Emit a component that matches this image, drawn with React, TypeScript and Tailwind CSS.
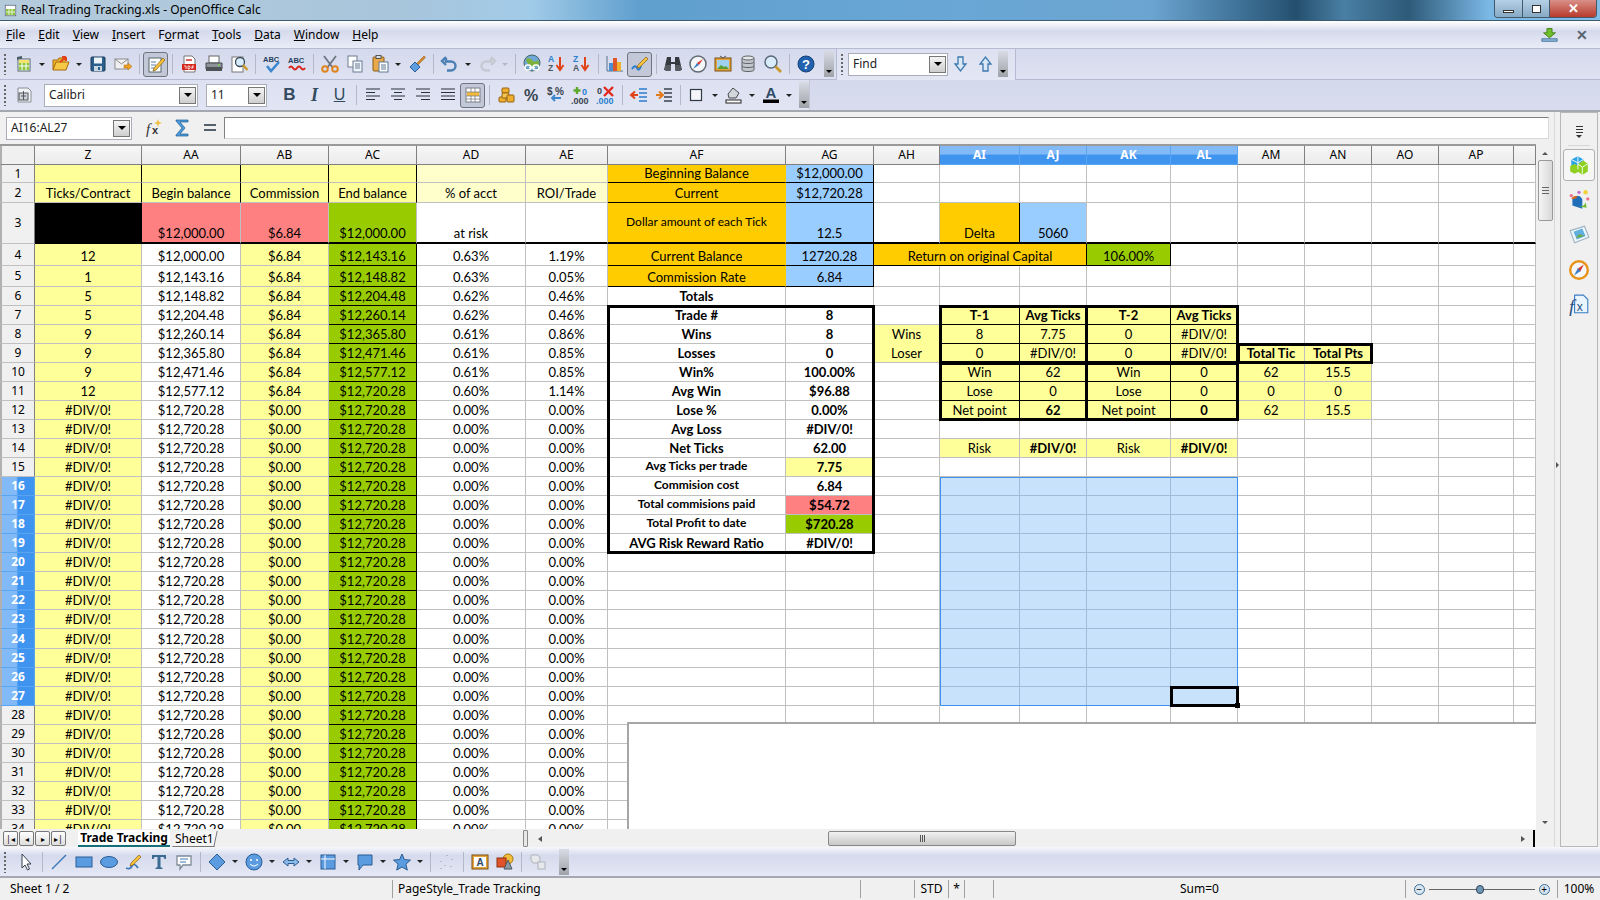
import React from "react";
import { twMerge } from "tailwind-merge";

const ui = "font-['Noto_Sans',sans-serif]";
const COLS = ["Z", "AA", "AB", "AC", "AD", "AE", "AF", "AG", "AH", "AI", "AJ", "AK", "AL", "AM", "AN", "AO", "AP", ""];
const GRID =
  "grid grid-cols-[35px_107px_99px_88px_88px_109px_82px_178px_88px_66px_80px_67px_84px_67px_67px_67px_67px_75px_22px] grid-rows-[19px_18px_20px_41px_22px_21px_repeat(18,19px)_20px_repeat(10,19px)]";

const YELLOW = "bg-[#ffff99]";
const ORANGE = "bg-[#ffcc00]";
const BLUE = "bg-[#99ccff]";
const GREEN = "bg-[#99cc00]";
const PINK = "bg-[#ff8080]";
const BK = "border-r-black border-b-black";

type Cell = { t?: string; c?: string; span?: boolean };

// trading rows 4-11, everything below that is the same #DIV/0! line
const trades: string[][] = [
  ["12", "$12,000.00", "$6.84", "$12,143.16", "0.63%", "1.19%"],
  ["1", "$12,143.16", "$6.84", "$12,148.82", "0.63%", "0.05%"],
  ["5", "$12,148.82", "$6.84", "$12,204.48", "0.62%", "0.46%"],
  ["5", "$12,204.48", "$6.84", "$12,260.14", "0.62%", "0.46%"],
  ["9", "$12,260.14", "$6.84", "$12,365.80", "0.61%", "0.86%"],
  ["9", "$12,365.80", "$6.84", "$12,471.46", "0.61%", "0.85%"],
  ["9", "$12,471.46", "$6.84", "$12,577.12", "0.61%", "0.85%"],
  ["12", "$12,577.12", "$6.84", "$12,720.28", "0.60%", "1.14%"],
];
const emptyTrade = ["#DIV/0!", "$12,720.28", "$0.00", "$12,720.28", "0.00%", "0.00%"];

const B = "font-bold";
const S = "font-bold text-[12px]";
const cells: Record<string, Cell> = {
  Z1: { c: YELLOW + " border-r-black" },
  AA1: { c: YELLOW + " border-r-black" },
  AB1: { c: YELLOW + " border-r-black" },
  AC1: { c: YELLOW + " border-r-black" },
  AD1: { c: "bg-[#ffffcc]" },
  AE1: { c: "bg-[#ffffcc]" },
  Z2: { t: "Ticks/Contract", c: YELLOW + " border-r-black" },
  AA2: { t: "Begin balance", c: YELLOW + " border-r-black" },
  AB2: { t: "Commission", c: YELLOW + " border-r-black" },
  AC2: { t: "End balance", c: YELLOW + " border-r-black" },
  AD2: { t: "% of acct", c: "bg-[#ffffcc]" },
  AE2: { t: "ROI/Trade", c: "bg-[#ffffcc]" },
  Z3: { c: "bg-black border-black" },
  AA3: { t: "$12,000.00", c: PINK },
  AB3: { t: "$6.84", c: PINK },
  AC3: { t: "$12,000.00", c: GREEN },
  AD3: { t: "at risk" },
  AF1: { t: "Beginning Balance", c: ORANGE + " border-b-black border-r-[#ffcc00]" },
  AG1: { t: "$12,000.00", c: BLUE + " " + BK },
  AF2: { t: "Current", c: ORANGE + " border-b-black border-r-[#ffcc00]" },
  AG2: { t: "$12,720.28", c: BLUE + " " + BK },
  AF3: { t: "Dollar amount of each Tick", c: ORANGE + " items-center text-[12px] border-r-[#ffcc00]" },
  AG3: { t: "12.5", c: BLUE + " border-r-black" },
  AI3: { t: "Delta", c: ORANGE + " border-r-black" },
  AJ3: { t: "5060", c: BLUE },
  AF4: { t: "Current Balance", c: ORANGE + " border-b-black border-r-[#ffcc00]" },
  AG4: { t: "12720.28", c: BLUE + " " + BK },
  AH4: { t: "Return on original Capital", c: ORANGE + " border-b-black border-r-black", span: true },
  AK4: { t: "106.00%", c: GREEN + " " + BK },
  AF5: { t: "Commission Rate", c: ORANGE + " border-b-black border-r-[#ffcc00]" },
  AG5: { t: "6.84", c: BLUE + " " + BK },
  AF6: { t: "Totals", c: B },
  AF7: { t: "Trade #", c: B },
  AG7: { t: "8", c: B },
  AF8: { t: "Wins", c: B },
  AG8: { t: "8", c: B },
  AF9: { t: "Losses", c: B },
  AG9: { t: "0", c: B },
  AF10: { t: "Win%", c: B },
  AG10: { t: "100.00%", c: B },
  AF11: { t: "Avg Win", c: B },
  AG11: { t: "$96.88", c: B },
  AF12: { t: "Lose %", c: B },
  AG12: { t: "0.00%", c: B },
  AF13: { t: "Avg Loss", c: B },
  AG13: { t: "#DIV/0!", c: B },
  AF14: { t: "Net Ticks", c: B },
  AG14: { t: "62.00", c: B },
  AF15: { t: "Avg Ticks per trade", c: S },
  AG15: { t: "7.75", c: B + " " + YELLOW },
  AF16: { t: "Commision cost", c: S },
  AG16: { t: "6.84", c: B },
  AF17: { t: "Total commisions paid", c: S },
  AG17: { t: "$54.72", c: B + " " + PINK },
  AF18: { t: "Total Profit to date", c: S },
  AG18: { t: "$720.28", c: B + " " + GREEN },
  AF19: { t: "AVG Risk Reward Ratio", c: B },
  AG19: { t: "#DIV/0!", c: B },
  AH8: { t: "Wins", c: YELLOW + " border-b-[#ffff99]" },
  AH9: { t: "Loser", c: YELLOW },
  AI7: { t: "T-1", c: B + " " + YELLOW + " " + BK },
  AJ7: { t: "Avg Ticks", c: B + " " + YELLOW + " " + BK },
  AK7: { t: "T-2", c: B + " " + YELLOW + " " + BK },
  AL7: { t: "Avg Ticks", c: B + " " + YELLOW + " " + BK },
  AI8: { t: "8", c: YELLOW + " " + BK },
  AJ8: { t: "7.75", c: YELLOW + " " + BK },
  AK8: { t: "0", c: YELLOW + " " + BK },
  AL8: { t: "#DIV/0!", c: YELLOW + " " + BK },
  AI9: { t: "0", c: YELLOW + " " + BK },
  AJ9: { t: "#DIV/0!", c: YELLOW + " " + BK },
  AK9: { t: "0", c: YELLOW + " " + BK },
  AL9: { t: "#DIV/0!", c: YELLOW + " " + BK },
  AI10: { t: "Win", c: YELLOW + " " + BK },
  AJ10: { t: "62", c: YELLOW + " " + BK },
  AK10: { t: "Win", c: YELLOW + " " + BK },
  AL10: { t: "0", c: YELLOW + " " + BK },
  AI11: { t: "Lose", c: YELLOW + " " + BK },
  AJ11: { t: "0", c: YELLOW + " " + BK },
  AK11: { t: "Lose", c: YELLOW + " " + BK },
  AL11: { t: "0", c: YELLOW + " " + BK },
  AI12: { t: "Net point", c: YELLOW + " " + BK },
  AJ12: { t: "62", c: B + " " + YELLOW + " " + BK },
  AK12: { t: "Net point", c: YELLOW + " " + BK },
  AL12: { t: "0", c: B + " " + YELLOW + " " + BK },
  AM9: { t: "Total Tic", c: B + " " + YELLOW },
  AN9: { t: "Total Pts", c: B + " " + YELLOW },
  AM10: { t: "62", c: YELLOW },
  AN10: { t: "15.5", c: YELLOW },
  AM11: { t: "0", c: YELLOW },
  AN11: { t: "0", c: YELLOW },
  AM12: { t: "62", c: YELLOW },
  AN12: { t: "15.5", c: YELLOW },
  AI14: { t: "Risk", c: YELLOW },
  AJ14: { t: "#DIV/0!", c: B + " " + YELLOW },
  AK14: { t: "Risk", c: YELLOW },
  AL14: { t: "#DIV/0!", c: B + " " + YELLOW },
};

function getCell(col: string, n: number): Cell {
  const key = col + n;
  const found = cells[key];
  if (found) return found;
  const idx = ["Z", "AA", "AB", "AC", "AD", "AE"].indexOf(col);
  if (n >= 4 && idx >= 0) {
    const t = (trades[n - 4] || emptyTrade)[idx];
    if (col === "Z" || col === "AB") return { t, c: YELLOW };
    if (col === "AC") return { t, c: GREEN + " " + BK };
    return { t };
  }
  if (n >= 16 && n <= 27 && ["AI", "AJ", "AK", "AL"].includes(col)) {
    return { c: "bg-[#c9e2fc] border-[#9fbbd8]" };
  }
  return {};
}

const selectedCols = ["AI", "AJ", "AK", "AL"];

function Sheet() {
  const rows: number[] = [];
  for (let i = 1; i <= 34; i++) rows.push(i);
  return (
    <div className="relative h-[685px] w-[1536px] overflow-hidden border-t-2 border-[#9a9a9a] bg-white font-['Lato',sans-serif] text-black">
      <div className={GRID}>
        <div className="border-r border-b border-l-2 border-r-[#808080] border-b-[#808080] border-l-[#b0b0b0] bg-[#f0f0f0]" />
        {COLS.map((c, i) =>
          selectedCols.includes(c) ? (
            <div
              key={i}
              className={`flex items-center justify-center border-b border-r border-[#5aa5f0] bg-[linear-gradient(#82baf8_0%,#82baf8_45%,#3f94f0_50%,#3f94f0_100%)] text-[12px] font-bold text-white ${ui}`}
            >
              {c}
            </div>
          ) : (
            <div
              key={i}
              className={`flex items-center justify-center border-b border-r border-[#808080] bg-[linear-gradient(#f7f7f7,#ebebeb)] text-[12px] ${ui}`}
            >
              {c}
            </div>
          ),
        )}
        {rows.map((n) => (
          <React.Fragment key={n}>
            {n >= 16 && n <= 27 ? (
              <div
                className={`flex items-center justify-center border-l-2 border-r border-b border-l-[#b0b0b0] border-r-[#5aa5f0] border-b-[#5aa5f0] bg-[linear-gradient(90deg,#82baf8_0%,#82baf8_45%,#3f94f0_50%,#3f94f0_100%)] text-[12px] font-bold text-white ${ui}`}
              >
                {n}
              </div>
            ) : (
              <div
                className={`flex items-center justify-center border-l-2 border-r border-b border-l-[#b0b0b0] border-r-[#808080] border-b-[#c0c0c0] bg-[#f0f0f0] text-[12px] ${ui}`}
              >
                {n}
              </div>
            )}
            {COLS.map((col) => {
              if (n === 4 && (col === "AI" || col === "AJ")) return null;
              const cell = col ? getCell(col, n) : {};
              return (
                <div
                  key={col || "end"}
                  className={twMerge(
                    "flex items-end justify-center overflow-hidden whitespace-nowrap border-r border-b border-[#c0c0c0] pb-px text-[13px] leading-[16px]",
                    n === 3 ? "border-b-2 border-b-black" : "",
                    cell.span ? "col-span-3" : "",
                    cell.c,
                  )}
                >
                  {cell.t}
                </div>
              );
            })}
          </React.Fragment>
        ))}
      </div>
      {/* thick cell borders and the selection sit over the cells, same tracks */}
      <div className={`pointer-events-none absolute inset-0 ${GRID}`}>
        <div className="col-start-8 col-end-10 row-start-8 row-end-21 -m-px border-[3px] border-black" />
        <div className="col-start-11 col-end-15 row-start-8 row-end-14 -m-px border-[3px] border-black" />
        <div className="col-start-13 col-end-14 row-start-8 row-end-14 -ml-0.5 border-l-[3px] border-black" />
        <div className="col-start-11 col-end-15 row-start-11 row-end-12 -mt-0.5 border-t-4 border-black" />
        <div className="col-start-15 col-end-17 row-start-10 row-end-11 -m-px border-[3px] border-black" />
        <div className="col-start-11 col-end-15 row-start-17 row-end-29 border border-[#3d92f0]" />
        <div className="relative col-start-14 col-end-15 row-start-28 row-end-29 -m-px border-[3px] border-black">
          <div className="absolute -right-[4px] -bottom-[4px] h-[5px] w-[5px] bg-black" />
        </div>
      </div>
      <div className="absolute top-[576px] bottom-0 left-[627px] right-0 border-t-2 border-l-2 border-[#a6a6a6] bg-white" />
    </div>
  );
}

const icons: Record<string, React.ReactNode> = {
  doc: (
    <>
      <path d="M3 3l5-1v4H3z" fill="#4a5a6a" />
      <rect x="4" y="5" width="12" height="12" fill="#fff" stroke="#566" />
      <rect x="5" y="9" width="10" height="7" fill="#8cc63f" />
      <path d="M5 12h10M8 9v7M12 9v7" stroke="#fff" />
      <rect x="5" y="6" width="10" height="3" fill="#f7e36b" />
    </>
  ),
  open: (
    <>
      <path d="M2 16V6h5l1-2h7v3" fill="#f0b92c" stroke="#a8690c" />
      <path d="M2 16l3-8h13l-3 8z" fill="#f6c944" stroke="#a8690c" />
      <path d="M9 8l6-5M15 3h-4M15 3v4" stroke="#e0431a" strokeWidth="2" fill="none" />
    </>
  ),
  save: (
    <>
      <rect x="3" y="3" width="14" height="14" rx="1" fill="#2b5f8e" stroke="#183a58" />
      <rect x="6" y="3.5" width="8" height="6" fill="#eef3f8" />
      <rect x="6" y="12" width="8" height="5" fill="#cbd6e0" />
      <rect x="10" y="13" width="2" height="3" fill="#2b5f8e" />
    </>
  ),
  mail: (
    <>
      <rect x="2" y="5" width="13" height="10" fill="#f1f1f1" stroke="#8b8b8b" />
      <path d="M2 5l6.5 5L15 5" fill="none" stroke="#8b8b8b" />
      <path d="M11 11h4V9l4 3.5-4 3.500V14h-4z" fill="#f0a020" stroke="#a86a10" strokeWidth=".5" />
    </>
  ),
  edit: (
    <>
      <rect x="3" y="4" width="12" height="14" fill="#fff" stroke="#566" />
      <path d="M5 8h5M5 11h5M5 14h4" stroke="#5b7fa6" />
      <path d="M8 14l9-10 2 2-9 10-3 1z" fill="#f4c23b" stroke="#8a5a12" strokeWidth=".7" />
    </>
  ),
  pdf: (
    <>
      <path d="M5 2h8l3 3v13H5z" fill="#fff" stroke="#777" />
      <rect x="3" y="10" width="14" height="6" fill="#d5281e" />
      <path d="M7 6h6" stroke="#c33" strokeWidth="1.500" />
      <path d="M5 12h2v3M9 12v3h1.500l.5-1.500-.5-1.500zM13 15v-3h2M13 13.500h1.500" stroke="#fff" strokeWidth=".8" fill="none" />
    </>
  ),
  print: (
    <>
      <rect x="5" y="2" width="10" height="7" fill="#fff" stroke="#666" />
      <path d="M2 9h16v6H2z" fill="#8d9499" stroke="#44494d" />
      <rect x="2" y="13" width="16" height="4" fill="#4c5257" />
      <circle cx="15" cy="11" r="1" fill="#7ed04b" />
    </>
  ),
  preview: (
    <>
      <rect x="3" y="3" width="11" height="15" fill="#fff" stroke="#777" />
      <circle cx="11" cy="8" r="4.500" fill="#d8ecfb" stroke="#3a4a58" strokeWidth="1.300" />
      <path d="M14 11l4.500 5" stroke="#c99a2c" strokeWidth="2.500" />
    </>
  ),
  spell: (
    <>
      <text x="1" y="8" fontSize="7.500" fontWeight="700" fill="#26425e" fontFamily="Liberation Sans">ABC</text>
      <path d="M5 12l4 5 8-9" fill="none" stroke="#3a87cf" strokeWidth="2.500" />
    </>
  ),
  autospell: (
    <>
      <text x="1" y="9" fontSize="7.500" fontWeight="700" fill="#26425e" fontFamily="Liberation Sans">ABC</text>
      <path d="M2 14q2-3 4 0t4 0 4 0 4 0" fill="none" stroke="#d8261c" strokeWidth="2" />
    </>
  ),
  cut: (
    <>
      <path d="M4 2l9 12M16 2L7 14" stroke="#6c7680" strokeWidth="1.800" />
      <circle cx="5" cy="15" r="2.800" fill="none" stroke="#e08420" strokeWidth="2" />
      <circle cx="15" cy="15" r="2.800" fill="none" stroke="#e08420" strokeWidth="2" />
    </>
  ),
  copy: (
    <>
      <rect x="3" y="2" width="9" height="11" fill="#fff" stroke="#6a7d90" />
      <rect x="8" y="7" width="9" height="11" fill="#eef4fb" stroke="#6a7d90" />
      <path d="M10 10h5M10 12h5M10 14h5" stroke="#6a7d90" />
    </>
  ),
  paste: (
    <>
      <rect x="3" y="3" width="11" height="14" rx="1" fill="#e9a84a" stroke="#8a5a12" />
      <rect x="6" y="1.500" width="5" height="3" fill="#d9dde2" stroke="#555" />
      <rect x="9" y="8" width="9" height="10" fill="#fff" stroke="#5e7a96" />
      <path d="M11 11h5M11 13h5M11 15h5" stroke="#5e7a96" />
    </>
  ),
  brush: (
    <>
      <path d="M9 10l8-8 1.500 1.500-8 8z" fill="#d4892c" stroke="#8a5a12" strokeWidth=".5" />
      <path d="M3 13l5-5 5 5-5 5z" fill="#5d9ee0" stroke="#2a5d94" />
    </>
  ),
  undo: (
    <path
      d="M6 4v3.500h5a4 4 0 0 1 0 9H7M6 3L2 7l4 4"
      fill="none"
      stroke="#4b7fb3"
      strokeWidth="2.400"
    />
  ),
  redo: (
    <path d="M14 4v3.500H9a4 4 0 0 0 0 9h4M14 3l4 4-4 4" fill="none" stroke="#c5c9d2" strokeWidth="2.400" />
  ),
  globe: (
    <>
      <circle cx="10" cy="9" r="8" fill="#6fa8d8" stroke="#466" />
      <path d="M4 5q4-2 6 1t6 0q2 4 0 6-6 2-9-1T4 5z" fill="#7fb03c" />
      <rect x="3" y="11" width="6" height="5" rx="2.500" fill="none" stroke="#fff" strokeWidth="1.500" />
      <rect x="11" y="11" width="6" height="5" rx="2.500" fill="none" stroke="#fff" strokeWidth="1.500" />
      <path d="M7 13.500h6" stroke="#fff" strokeWidth="1.500" />
    </>
  ),
  asc: (
    <>
      <text x="1" y="8" fontSize="8.500" fontWeight="700" fill="#2d7fce" fontFamily="Liberation Sans">A</text>
      <text x="1" y="17" fontSize="8.500" fontWeight="700" fill="#4d5660" fontFamily="Liberation Sans">Z</text>
      <path d="M13 3v12M9.500 11l3.500 5 3.500-5" fill="none" stroke="#e0431a" strokeWidth="2" />
    </>
  ),
  desc: (
    <>
      <text x="1" y="8" fontSize="8.500" fontWeight="700" fill="#2d7fce" fontFamily="Liberation Sans">Z</text>
      <text x="1" y="17" fontSize="8.500" fontWeight="700" fill="#4d5660" fontFamily="Liberation Sans">A</text>
      <path d="M13 3v12M9.500 11l3.500 5 3.500-5" fill="none" stroke="#e0431a" strokeWidth="2" />
    </>
  ),
  chart: (
    <>
      <path d="M2 2v15h16" fill="none" stroke="#55708c" />
      <rect x="4" y="9" width="4" height="8" fill="#4d8ed0" />
      <rect x="8" y="4" width="4" height="13" fill="#e0572a" />
      <rect x="12" y="8" width="4" height="9" fill="#f0b030" />
    </>
  ),
  draw: (
    <>
      <path d="M2 15q3-5 5-1t4-2" fill="none" stroke="#2d7fce" strokeWidth="2" />
      <path d="M8 11l8-8 2 2-8 8-3 1z" fill="#f4c23b" stroke="#8a5a12" strokeWidth=".7" />
    </>
  ),
  binoculars: (
    <>
      <path d="M4 3h4v5h4V3h4l3 13H12V10H8v6H1z" fill="#363a3e" />
      <rect x="2" y="11" width="6" height="6" rx="1" fill="#565b60" />
      <rect x="12" y="11" width="6" height="6" rx="1" fill="#565b60" />
    </>
  ),
  compass: (
    <>
      <circle cx="10" cy="10" r="8" fill="#f4f6f8" stroke="#606a74" strokeWidth="1.500" />
      <path d="M15 5l-4 6-2-2z" fill="#d8362a" />
      <path d="M5 15l4-6 2 2z" fill="#3a7ec4" />
    </>
  ),
  gallery: (
    <>
      <rect x="2" y="4" width="16" height="13" fill="#e3a53c" stroke="#7e4e10" />
      <rect x="4" y="6" width="12" height="9" fill="#9fd0f0" />
      <path d="M4 15l4-4 3 2 2-1 3 3z" fill="#5d9e32" />
      <path d="M7 2l3 2 3-2" fill="none" stroke="#555" />
    </>
  ),
  db: (
    <>
      <path d="M4 4v12c0 2 12 2 12 0V4" fill="#c3c7cb" stroke="#5d6368" />
      <ellipse cx="10" cy="4" rx="6" ry="2" fill="#e5e7e9" stroke="#5d6368" />
      <path d="M4 8c0 2 12 2 12 0M4 12c0 2 12 2 12 0" fill="none" stroke="#5d6368" />
    </>
  ),
  zoom: (
    <>
      <circle cx="8" cy="8" r="6" fill="#d8ecfb" stroke="#5a6a78" strokeWidth="1.500" />
      <path d="M12.500 12.500l5.500 5.500" stroke="#c99a2c" strokeWidth="2.800" />
    </>
  ),
  help: (
    <>
      <circle cx="10" cy="10" r="8" fill="#2162ae" stroke="#163f74" />
      <text x="10" y="15" textAnchor="middle" fontSize="13" fontWeight="700" fill="#fff" fontFamily="Liberation Sans">?</text>
    </>
  ),
  down: <path d="M7 3h5v7h3l-5.500 7L4 10h3z" fill="#d8e8f6" stroke="#3c78ad" strokeWidth="1.300" />,
  up: <path d="M7 17h5v-7h3L9.500 3 4 10h3z" fill="#d8e8f6" stroke="#3c78ad" strokeWidth="1.300" />,
  styles: (
    <>
      <path d="M4 3h10l3 3v11H4z" fill="#f1f3f6" stroke="#8a8f96" />
      <rect x="5" y="8" width="9" height="7" fill="#cfd3d8" stroke="#55595e" />
      <path d="M9.500 6v9M7 11h5" stroke="#55595e" />
    </>
  ),
  left: <path d="M3 4h14M3 7.500h9M3 11h14M3 14.500h9" stroke="#28323c" strokeWidth="1.200" />,
  center: <path d="M3 4h14M6 7.500h8M3 11h14M6 14.500h8" stroke="#28323c" strokeWidth="1.200" />,
  right: <path d="M3 4h14M8 7.500h9M3 11h14M8 14.500h9" stroke="#28323c" strokeWidth="1.200" />,
  justify: <path d="M3 4h14M3 7.500h14M3 11h14M3 14.500h14" stroke="#28323c" strokeWidth="1.200" />,
  merge: (
    <>
      <rect x="3" y="3" width="14" height="14" fill="#fff" stroke="#7a7f86" />
      <rect x="4" y="7" width="12" height="4" fill="#f2b93b" />
      <path d="M3 7h14M3 11h14M3 14h14M8 3v4M12 3v4M8 11v6M12 11v6" stroke="#7a7f86" strokeWidth=".8" />
    </>
  ),
  coins: (
    <>
      <rect x="3" y="12" width="7" height="5" rx="1" fill="#efae2e" stroke="#94620f" />
      <rect x="6" y="3" width="7" height="5" rx="1" fill="#efae2e" stroke="#94620f" />
      <rect x="6" y="8" width="7" height="5" rx="1" fill="#f5c552" stroke="#94620f" />
      <rect x="11" y="10" width="7" height="7" rx="1" fill="#efae2e" stroke="#94620f" />
    </>
  ),
  percent: (
    <text x="10" y="16" textAnchor="middle" fontSize="16" fontWeight="700" fill="#38434e" fontFamily="Liberation Sans">%</text>
  ),
  money: (
    <>
      <text x="1" y="10" fontSize="10" fontWeight="700" fill="#38434e" fontFamily="Liberation Sans">$</text>
      <text x="9" y="10" fontSize="10" fontWeight="700" fill="#38434e" fontFamily="Liberation Sans">%</text>
      <path d="M15 13H7M9 10l-3 3 3 3" fill="none" stroke="#3a87cf" strokeWidth="1.800" />
    </>
  ),
  addDec: (
    <>
      <path d="M6 2v7M2.500 5.500h7" stroke="#5ea82c" strokeWidth="2.400" />
      <text x="11" y="10" fontSize="9" fontWeight="700" fill="#2d7fce" fontFamily="Liberation Sans">0</text>
      <text x="0" y="19" fontSize="9" fontWeight="700" fill="#38434e" fontFamily="Liberation Sans">.000</text>
    </>
  ),
  delDec: (
    <>
      <text x="1" y="9" fontSize="9" fontWeight="700" fill="#38434e" fontFamily="Liberation Sans">0</text>
      <path d="M8 2l9 9M17 2l-9 9" stroke="#e02a20" strokeWidth="2.400" />
      <text x="0" y="19" fontSize="9" fontWeight="700" fill="#2d7fce" fontFamily="Liberation Sans">.000</text>
    </>
  ),
  outdent: (
    <>
      <path d="M10 4h8M10 8h8M10 12h8M10 16h8" stroke="#2d7fce" strokeWidth="1.400" />
      <path d="M9 10H3M6 6.500L2 10l4 3.500" fill="none" stroke="#e0431a" strokeWidth="2" />
    </>
  ),
  indent: (
    <>
      <path d="M10 4h8M10 8h8M10 12h8M10 16h8" stroke="#38434e" strokeWidth="1.400" />
      <path d="M2 10h6M5 6.500L9 10l-4 3.500" fill="none" stroke="#e07a1a" strokeWidth="2" />
    </>
  ),
  border: <rect x="3.500" y="4.500" width="11" height="11" fill="#f4f6fa" stroke="#2e3a46" strokeWidth="1.200" />,
  fill: (
    <>
      <path d="M4 9l5-6 6 5-3 5H5z" fill="#d3d7db" stroke="#44494e" />
      <rect x="2" y="15" width="15" height="3" fill="#fff" stroke="#222" />
    </>
  ),
  fontColor: (
    <>
      <text x="10" y="13" textAnchor="middle" fontSize="15" fontWeight="700" fill="#2d4a66" fontFamily="Liberation Sans">A</text>
      <rect x="2" y="14.500" width="16" height="3.500" fill="#000" />
    </>
  ),
  arrow: <path d="M6 2v14l3-3 2.500 5 2-1-2.500-5h4z" fill="#fff" stroke="#33404c" />,
  line: <path d="M3 17L17 3" stroke="#3d79b8" strokeWidth="1.500" />,
  rect: <rect x="2" y="5" width="16" height="10" fill="#5b9be0" stroke="#2a5d94" />,
  ellipse: <ellipse cx="10" cy="10" rx="8.500" ry="5.500" fill="#5b9be0" stroke="#2a5d94" />,
  free: (
    <>
      <path d="M2 16q4 2 6-2t6 2" fill="none" stroke="#3d79b8" strokeWidth="1.800" />
      <path d="M7 11l8-8 2 2-8 8-3 1z" fill="#f4c23b" stroke="#8a5a12" strokeWidth=".7" />
    </>
  ),
  text: <path d="M3 3h14v4h-1.500l-1-2H11.500v10l2 1v1h-7v-1l2-1V5H5.500l-1 2H3z" fill="#3b6a92" />,
  note: (
    <>
      <path d="M3 4h14v9H9l-3 4v-4H3z" fill="#fff" stroke="#7e8a96" strokeWidth="1.300" />
      <path d="M6 7h8M6 10h6" stroke="#3d79b8" />
    </>
  ),
  diamond: <path d="M10 2l8 8-8 8-8-8z" fill="#5b9be0" stroke="#2a5d94" />,
  smiley: (
    <>
      <circle cx="10" cy="10" r="8" fill="#5b9be0" stroke="#2a5d94" />
      <circle cx="7" cy="8" r="1" fill="#fff" />
      <circle cx="13" cy="8" r="1" fill="#fff" />
      <path d="M6 12q4 4 8 0" fill="none" stroke="#fff" />
    </>
  ),
  arrows: <path d="M2 10l5-4v2.500h6V6l5 4-5 4v-2.500H7V14z" fill="#8dbbea" stroke="#2a5d94" />,
  flow: (
    <>
      <rect x="3" y="3" width="14" height="14" fill="#5b9be0" stroke="#2a5d94" />
      <path d="M7 3v14M3 7h14" stroke="#fff" />
    </>
  ),
  speech: <path d="M3 3h14v10h-9l-4 5v-5H3z" fill="#5b9be0" stroke="#2a5d94" strokeLinejoin="round" />,
  star: <path d="M10 2l2.400 5.600 6.100.5-4.600 4 1.400 6L10 15l-5.300 3.100 1.400-6-4.600-4 6.100-.5z" fill="#5b9be0" stroke="#2a5d94" />,
  points: <path d="M10 3v1M4 9v1M15 7v1M8 13v1M14 14v1M4 16v1" stroke="#a9afb8" strokeWidth="1.500" />,
  fontwork: (
    <>
      <rect x="2" y="3" width="16" height="14" fill="#e3a53c" stroke="#7e4e10" />
      <rect x="4" y="5" width="12" height="10" fill="#fff" />
      <text x="10" y="14" textAnchor="middle" fontSize="10" fontWeight="700" fill="#2d4a66" fontFamily="Liberation Sans">A</text>
    </>
  ),
  shapes: (
    <>
      <circle cx="13" cy="7" r="5" fill="#f2bd3c" stroke="#a87a14" />
      <rect x="2" y="6" width="9" height="9" fill="#e0532a" stroke="#8e2f10" />
      <path d="M13 8l4 9H9z" fill="#8e9aa6" stroke="#4c5660" />
    </>
  ),
  extrude: (
    <>
      <path d="M3 3h7l2 3v5H5l-2-3z" fill="#e6e8ec" stroke="#aeb3ba" />
      <rect x="10" y="10" width="7" height="7" fill="#e6e8ec" stroke="#aeb3ba" />
    </>
  ),
  fx: (
    <>
      <text x="2" y="16" fontSize="15" fontStyle="italic" fontFamily="Liberation Serif" fill="#333">f</text>
      <text x="8" y="16" fontSize="11" fontWeight="700" fontFamily="Liberation Sans" fill="#333">x</text>
      <path d="M14 1l1 3 3 1-3 1-1 3-1-3-3-1 3-1z" fill="#f2bd3c" />
    </>
  ),
  sum: <path d="M16 4V2H4v1l6 7-6 7v1h12v-2H8l5-6-5-6z" fill="#4f9ad8" stroke="#1e5f98" strokeWidth=".7" />,
  equal: <path d="M4 7h12M4 12h12" stroke="#55606a" strokeWidth="2" />,
  cubes: (
    <>
      <path d="M3 5l6-3 5 3v6l-5 3-6-3z" fill="#29a4e4" />
      <path d="M9 9l5-3 4 3v7l-5 3-4-3z" fill="#8fd020" />
      <path d="M2 11l4-2 4 2v5l-4 2-4-2z" fill="#8fd020" />
      <path d="M9 2v12M3 5l6 3 5-3M13 12v7M9 9l4 3 5-3" fill="none" stroke="#fff" strokeWidth=".8" />
    </>
  ),
  sideStyles: (
    <>
      <path d="M4 8q6-4 9 1v9l-9-3z" fill="#1f6fb8" />
      <path d="M3 9q2-4 6-2l-3 2z" fill="#d9681e" />
      <path d="M10 16q5 0 6-4l1 5z" fill="#6fbb30" />
      <circle cx="10" cy="3" r="1.500" fill="#c36ad0" />
      <circle cx="16" cy="3" r="2" fill="#f2d13c" />
      <circle cx="3" cy="6" r="1.500" fill="#ef6f8a" />
      <circle cx="18" cy="9" r="1.500" fill="#ef6f8a" />
    </>
  ),
  sideGallery: (
    <>
      <path d="M2 6l13-4 4 10-13 5z" fill="#eef6fb" stroke="#9eb2c0" />
      <path d="M5 7l8-3 3 7-8 3z" fill="#5fb0e0" />
      <path d="M7 13l3-4 5 2z" fill="#6fa848" />
    </>
  ),
  sideCompass: (
    <>
      <circle cx="10" cy="10" r="8" fill="#f4f6fa" stroke="#e8941a" strokeWidth="2.200" />
      <path d="M14.500 5l-3.500 6.500L8.500 9z" fill="#d8362a" />
      <path d="M5.500 15L9 8.500l2.500 2.500z" fill="#3a7ec4" />
    </>
  ),
  sideFx: (
    <>
      <path d="M6 1h8l4 4v12H6z" fill="#eaf4fc" stroke="#3a7ec4" />
      <text x="1" y="17" fontSize="17" fontStyle="italic" fontFamily="Liberation Serif" fill="#1e4f82">f</text>
      <text x="8" y="15" fontSize="11" fontFamily="Liberation Sans" fill="#1e4f82">x</text>
    </>
  ),
  cubeSm: (
    <>
      <rect x="3" y="3" width="14" height="14" fill="#fff" stroke="#5b6670" />
      <rect x="4" y="8" width="12" height="8" fill="#8cc63f" />
      <path d="M8 8v8M12 8v8M4 12h12" stroke="#fff" />
    </>
  ),
  update: (
    <>
      <path d="M7 3h6v5h4l-7 6-7-6h4z" fill="#6fbf2a" stroke="#3c7a10" />
      <path d="M1 15h18v3H1z" fill="#8fb8da" stroke="#3e6e96" />
    </>
  ),
};

function Ic({ name, size = "h-5 w-5" }: { name: string; size?: string }) {
  return (
    <svg viewBox="0 0 20 20" className={size}>
      {icons[name]}
    </svg>
  );
}

function Btn({ name, on }: { name: string; on?: boolean }) {
  return (
    <div
      className={
        on
          ? "flex h-[25px] w-[25px] shrink-0 items-center justify-center rounded-[3px] border border-[#6f7480] bg-[#c3c8d8]"
          : "flex h-[25px] w-[25px] shrink-0 items-center justify-center"
      }
    >
      <Ic name={name} />
    </div>
  );
}

const Dd = ({ off }: { off?: boolean }) => (
  <div className="flex w-3 shrink-0 justify-center">
    <div
      className={`h-0 w-0 border-x-[3px] border-t-[3px] border-x-transparent ${off ? "border-t-[#b4b8c4]" : "border-t-[#222]"}`}
    />
  </div>
);
const Sep = () => (
  <div className="flex h-[20px] w-2 shrink-0 justify-center">
    <div className="w-px bg-[#b3b8c8]" />
  </div>
);
const Grip = () => (
  <div className="ml-1 h-[22px] w-[2px] shrink-0 bg-[radial-gradient(#666_40%,transparent_50%)] bg-[length:2px_4px]" />
);
const More = () => (
  <div className="flex h-[26px] w-[10px] shrink-0 items-end justify-center bg-[linear-gradient(#d8dbe4,#9fa2a8)] pb-1">
    <div className="h-0 w-0 border-x-[3px] border-t-[3px] border-x-transparent border-t-black" />
  </div>
);
const Combo = ({ text, w, h = "h-[23px]" }: { text: string; w: string; h?: string }) => (
  <div className={`${w} ${h} flex shrink-0 items-center justify-between border border-[#a9adb8] bg-white pl-1 text-[12px]`}>
    <span className="truncate text-[#222]">{text}</span>
    <div className="mr-px flex h-[17px] w-[17px] shrink-0 items-center justify-center border border-[#777] bg-[linear-gradient(#f4f4f4,#cfcfcf)]">
      <div className="h-0 w-0 border-x-[4px] border-t-[4px] border-x-transparent border-t-black" />
    </div>
  </div>
);

const menus: [string, string, string][] = [
  ["", "F", "ile"],
  ["", "E", "dit"],
  ["", "V", "iew"],
  ["", "I", "nsert"],
  ["F", "o", "rmat"],
  ["", "T", "ools"],
  ["", "D", "ata"],
  ["", "W", "indow"],
  ["", "H", "elp"],
];

function TitleBar() {
  return (
    <div className="relative flex h-[21px] shrink-0 items-center border-b border-[#3d5b70] bg-[linear-gradient(90deg,#b5cbdc_0%,#a8c5db_25%,#a2cbe8_33%,#5f9fce_40%,#6aa7d6_60%,#6ba4d0_72%,#3b6d92_78%,#24506e_81%,#4a7fa5_84%,#2d5a78_88%,#7ab7e4_93%,#83bde8_100%)] pl-[3px]">
      <Ic name="cubeSm" size="h-[15px] w-[15px]" />
      <span className={`ml-[3px] text-[12px] text-black ${ui}`}>Real Trading Tracking.xls - OpenOffice Calc</span>
      {/* window caption buttons */}
      <div className="absolute top-0 right-[3px] flex h-[18px] overflow-hidden rounded-b-[4px] border border-t-0 border-[#44596a]">
        <div className="flex w-[28px] items-center justify-center border-r border-[#44596a] bg-[linear-gradient(#b5d0e6,#87a9c4)]">
          <div className="mt-1.5 h-[3px] w-[11px] border border-[#333] bg-white" />
        </div>
        <div className="flex w-[27px] items-center justify-center border-r border-[#44596a] bg-[linear-gradient(#b5d0e6,#87a9c4)]">
          <div className="h-[8px] w-[9px] border-[1.500px] border-[#333] bg-white" />
        </div>
        <div className="flex w-[46px] items-center justify-center bg-[linear-gradient(#d99088,#b83a2c)] text-[13px] leading-none font-bold text-white">
          ✕
        </div>
      </div>
    </div>
  );
}

function MenuBar() {
  return (
    <div className={`flex h-[28px] shrink-0 items-center justify-between border-b border-[#b5bbd0] bg-[linear-gradient(#fff_0%,#d5daec_38%,#e9ecf7_100%)] pl-[6px] pr-3 text-[12px] text-black ${ui}`}>
      <div className="flex gap-[13px]">
        {menus.map(([a, u, b]) => (
          <span key={a + u + b}>
            {a}
            <u>{u}</u>
            {b}
          </span>
        ))}
      </div>
      <div className="flex items-center gap-[18px]">
        <Ic name="update" size="h-[17px] w-[17px]" />
        <span className="text-[14px] font-bold text-[#5a6470]">✕</span>
      </div>
    </div>
  );
}

function ToolbarOne() {
  return (
    <div className={`flex h-[31px] shrink-0 items-center border-b border-[#b5bbd0] bg-[linear-gradient(#d4d9ec,#dee2f2)] ${ui}`}>
      <Grip />
      <div className="w-[5px]" />
      <Btn name="doc" /><Dd /><Btn name="open" /><Dd /><Btn name="save" /><Btn name="mail" /><Sep />
      <Btn name="edit" on /><Sep />
      <Btn name="pdf" /><Btn name="print" /><Btn name="preview" /><Sep />
      <Btn name="spell" /><Btn name="autospell" /><Sep />
      <Btn name="cut" /><Btn name="copy" /><Btn name="paste" /><Dd /><Btn name="brush" /><Sep />
      <Btn name="undo" /><Dd /><Btn name="redo" /><Dd off /><Sep />
      <Btn name="globe" /><Btn name="asc" /><Btn name="desc" /><Sep />
      <Btn name="chart" /><Btn name="draw" on /><Sep />
      <Btn name="binoculars" /><Btn name="compass" /><Btn name="gallery" /><Btn name="db" /><Btn name="zoom" /><Sep />
      <Btn name="help" />
      <div className="w-[6px]" />
      <More />
      {/* find bar */}
      <div className="ml-[2px] flex h-[31px] w-[180px] items-center border-x border-[#b5bbd0] bg-[linear-gradient(#dde1f1,#e3e6f4)]">
        <Grip />
        <div className="w-[5px]" />
        <Combo text="Find" w="w-[100px]" h="h-[23px] text-[#777]" />
        <div className="flex w-[50px] justify-around">
          <Ic name="down" /><Ic name="up" />
        </div>
        <More />
      </div>
    </div>
  );
}

function ToolbarTwo() {
  return (
    <div className={`flex h-[32px] shrink-0 items-center border-b-2 border-[#a5a8b0] bg-[linear-gradient(#d4d9ec,#d8dcee)] ${ui}`}>
      <div className="flex h-full w-[810px] shrink-0 items-center border-r border-[#c2c6d6] bg-[linear-gradient(#dde1f1,#e1e4f3)]">
        <Grip />
        <div className="w-[5px]" />
        <Btn name="styles" />
        <div className="w-2" />
        <Combo text="Calibri" w="w-[154px]" />
        <div className="w-2" />
        <Combo text="11" w="w-[61px]" />
        <div className="w-[10px]" />
        <span className="w-[25px] text-center font-['Liberation_Sans'] text-[17px] font-bold text-[#334a5e]">B</span>
        <span className="w-[25px] text-center font-['Liberation_Serif'] text-[18px] font-bold text-[#334a5e] italic">I</span>
        <span className="w-[25px] text-center font-['Liberation_Sans'] text-[16px] text-[#334a5e] underline">U</span>
        <Sep />
        <Btn name="left" /><Btn name="center" /><Btn name="right" /><Btn name="justify" /><Btn name="merge" on /><Sep />
        <Btn name="coins" /><Btn name="percent" /><Btn name="money" /><Btn name="addDec" /><Btn name="delDec" /><Sep />
        <Btn name="outdent" /><Btn name="indent" /><Sep />
        <Btn name="border" /><Dd /><Btn name="fill" /><Dd /><Btn name="fontColor" /><Dd />
        <div className="w-1" />
        <More />
      </div>
    </div>
  );
}

function FormulaBar() {
  return (
    <div className={`flex h-[32px] shrink-0 items-center bg-[#f0f0f0] pl-[6px] ${ui}`}>
      <Combo text="AI16:AL27" w="w-[126px]" />
      <div className="ml-2 flex w-[84px] shrink-0 items-center justify-around">
        <Ic name="fx" /><Ic name="sum" /><Ic name="equal" />
      </div>
      <div className="h-[22px] w-[1325px] border border-[#d8d8d8] border-t-[#808080] border-l-[#808080] bg-white" />
    </div>
  );
}

function VScroll() {
  return (
    <div className="flex w-[18px] shrink-0 flex-col items-center bg-[#f0f0f0]">
      <div className="mt-2 h-0 w-0 border-x-[3px] border-b-[3px] border-x-transparent border-b-[#555]" />
      <div className="mt-[5px] flex h-[61px] w-[15px] flex-col items-center justify-center gap-[2px] rounded-[2px] border border-[#999] bg-[linear-gradient(90deg,#f4f4f4,#d9d9d9)]">
        <div className="h-px w-[7px] bg-[#666]" />
        <div className="h-px w-[7px] bg-[#666]" />
        <div className="h-px w-[7px] bg-[#666]" />
      </div>
      <div className="mt-auto mb-[6px] h-0 w-0 border-x-[3px] border-t-[3px] border-x-transparent border-t-[#555]" />
    </div>
  );
}

function TabBar() {
  return (
    <div className={`flex h-[17px] shrink-0 items-center bg-[#f0f0f0] text-[12px] text-black ${ui}`}>
      <div className="ml-[3px] flex w-[65px] shrink-0 gap-px">
        {["|◂", "◂", "▸", "▸|"].map((g) => (
          <div key={g} className="flex h-[15px] w-[15px] items-center justify-center rounded-[2px] border border-[#777] bg-[linear-gradient(#fff,#ddd)] text-[8px] leading-none">
            {g}
          </div>
        ))}
      </div>
      <div className="relative ml-[10px] flex h-[17px] w-[92px] shrink-0 items-center justify-center border-b-2 border-[#13707a] bg-white font-bold">
        Trade Tracking
      </div>
      <div className="ml-[4px] flex h-[16px] w-[42px] shrink-0 -skew-x-12 items-center justify-center border-r border-b border-[#777] bg-[#f5f5f5]">
        <span className="skew-x-12">Sheet1</span>
      </div>
      <div className="ml-[307px] h-[17px] w-[5px] shrink-0 rounded-[1px] border border-[#888] bg-[#e8e8e8]" />
      <div className="ml-[10px] h-0 w-0 shrink-0 border-y-[3px] border-r-[4px] border-y-transparent border-r-[#555]" />
      <div className="ml-[286px] flex h-[15px] w-[188px] shrink-0 items-center justify-center gap-px rounded-[2px] border border-[#888] bg-[linear-gradient(#f2f2f2,#c8c8c8)]">
        <div className="h-[7px] w-px bg-[#555]" />
        <div className="h-[7px] w-px bg-[#555]" />
        <div className="h-[7px] w-px bg-[#555]" />
      </div>
      <div className="ml-[505px] h-0 w-0 shrink-0 border-y-[3px] border-l-[4px] border-y-transparent border-l-[#555]" />
      <div className="ml-[8px] h-[17px] w-[2px] shrink-0 bg-black" />
    </div>
  );
}

function Sidebar() {
  return (
    <div className="flex h-full w-[38px] shrink-0 flex-col items-center border border-[#b8b8b8] bg-[#f0f0f0] pt-[13px]">
      <div className="flex flex-col items-center gap-[2px]">
        <div className="h-px w-[7px] bg-[#333]" />
        <div className="h-px w-[7px] bg-[#333]" />
        <div className="h-px w-[7px] bg-[#333]" />
        <div className="h-0 w-0 border-x-[3px] border-t-[3px] border-x-transparent border-t-[#333]" />
      </div>
      <div className="mt-[7px] h-px w-[22px] bg-[#d5d5d5]" />
      <div className="mt-[3px] flex h-[32px] w-[32px] items-center justify-center rounded-[3px] border border-[#b0b0b0] bg-[#f6f6f6]">
        <Ic name="cubes" size="h-[22px] w-[22px]" />
      </div>
      <div className="mt-[8px] flex flex-col items-center gap-[13px]">
        <Ic name="sideStyles" size="h-[22px] w-[22px]" />
        <Ic name="sideGallery" size="h-[22px] w-[22px]" />
        <Ic name="sideCompass" size="h-[22px] w-[22px]" />
        <Ic name="sideFx" size="h-[22px] w-[22px]" />
      </div>
    </div>
  );
}

function DrawBar() {
  return (
    <div className="flex h-[31px] shrink-0 items-center border-b-2 border-[#a5a8b0] bg-[linear-gradient(#f6f8fd_0%,#d5daec_30%,#e5e8f5_100%)]">
      <Grip />
      <div className="w-[7px]" />
      <Btn name="arrow" /><Sep />
      <Btn name="line" /><Btn name="rect" /><Btn name="ellipse" /><Btn name="free" /><Btn name="text" /><Btn name="note" /><Sep />
      <Btn name="diamond" /><Dd /><Btn name="smiley" /><Dd /><Btn name="arrows" /><Dd /><Btn name="flow" /><Dd /><Btn name="speech" /><Dd /><Btn name="star" /><Dd /><Sep />
      <Btn name="points" /><Sep />
      <Btn name="fontwork" /><Btn name="shapes" /><Sep />
      <Btn name="extrude" />
      <div className="w-[9px]" />
      <More />
    </div>
  );
}

function StatusBar() {
  const seg = "flex h-[18px] items-center justify-center border-l border-[#a0a0a0]";
  return (
    <div className={`flex h-[22px] shrink-0 items-center bg-[#f0f0f0] text-[12px] text-black ${ui}`}>
      <div className="w-[392px] pl-[10px]">Sheet 1 / 2</div>
      <div className={`${seg} w-[468px] justify-start pl-[5px]`}>PageStyle_Trade Tracking</div>
      <div className={`${seg} w-[54px]`} />
      <div className={`${seg} w-[34px]`}>STD</div>
      <div className={`${seg} w-[16px]`}>*</div>
      <div className={`${seg} w-[29px]`} />
      <div className={`${seg} w-[412px]`}>Sum=0</div>
      <div className={`${seg} w-[152px] gap-[4px]`}>
        <div className="flex h-[11px] w-[11px] items-center justify-center rounded-full border border-[#3c6e96] bg-[#d7e6f2] text-[10px] leading-none">−</div>
        <div className="relative h-px w-[106px] bg-[#666]">
          <div className="absolute -top-[4px] left-[47px] h-[9px] w-[8px] rounded-full border border-[#345] bg-[#6f97b8]" />
        </div>
        <div className="flex h-[11px] w-[11px] items-center justify-center rounded-full border border-[#3c6e96] bg-[#d7e6f2] text-[10px] leading-none">+</div>
      </div>
      <div className={`${seg} w-[43px]`}>100%</div>
    </div>
  );
}

export default function App() {
  return (
    <div className="flex h-[900px] w-[1600px] flex-col overflow-hidden bg-[#f0f0f0]">
      <TitleBar />
      <MenuBar />
      <ToolbarOne />
      <ToolbarTwo />
      <div className="flex min-h-0 flex-1">
        <div className="flex w-[1554px] shrink-0 flex-col">
          <FormulaBar />
          <div className="flex min-h-0 flex-1">
            <Sheet />
            <VScroll />
          </div>
          <TabBar />
        </div>
        <div className="relative w-[6px] shrink-0 border-l border-[#d8d8d8]">
          <div className="absolute top-[350px] left-[1px] h-0 w-0 border-y-[3px] border-l-[3px] border-y-transparent border-l-[#555]" />
        </div>
        <Sidebar />
      </div>
      <DrawBar />
      <StatusBar />
    </div>
  );
}
